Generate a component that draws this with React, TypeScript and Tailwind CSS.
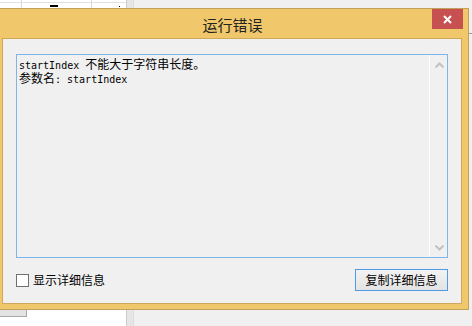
const cjk = "font-['Noto_Sans_CJK_SC',sans-serif]";

const Mono = ({ children }: { children: string }) => (
  <span className="font-['DejaVu_Sans_Mono',monospace] text-[10px]">{children}</span>
);

const Chevron = ({ up }: { up?: boolean }) => (
  <svg width="9" height="6" viewBox="0 0 9 6" className="block">
    <path
      d={up ? "M0.5 5.5 L4.5 1.5 L8.5 5.5" : "M0.5 0.5 L4.5 4.5 L8.5 0.5"}
      fill="none"
      stroke="#c2c2c2"
      strokeWidth="2"
    />
  </svg>
);

const Desktop = () => (
  <div className="flex h-full">
    {/* spreadsheet behind the dialog */}
    <div className="w-[126px] bg-white flex flex-col">
      <div className="h-[8px] flex">
        <div className="w-[22px] border-r border-[#dadada] flex flex-col">
          <div className="h-[3px] border-b border-[#e2e2e2]" />
        </div>
        <div className="w-[70px] border-r border-[#dadada] flex flex-col">
          <div className="h-[3px] border-b border-[#e2e2e2]" />
          <div className="ml-[28px] mt-[2px] w-[8px] h-[2px] bg-black" />
        </div>
        <div className="flex-1 flex flex-col">
          <div className="h-[3px] border-b border-[#e2e2e2]" />
          <div className="ml-[27px] mt-[3px] w-[1px] h-[1px] bg-black" />
        </div>
      </div>
      <div className="flex-1" />
      <div className="h-[16px]">
        <div className="w-[27px] h-[7px] bg-[#e3e3e3] border-r border-b border-[#a8a8a8]" />
      </div>
    </div>
    <div className="w-[7px] bg-[#e6e6e6] border-l border-[#cdcdcd]" />
    <div className="flex-1 bg-[#f0f0f0] border-l border-[#dcdcdc] flex flex-col items-end">
      <div className="mt-[33px] w-[4px] border-t border-[#a0a0a0]" />
    </div>
  </div>
);

const ErrorDialog = () => (
  <div className="absolute left-[-4px] top-[8px] w-[473px] h-[302px] border border-[#c4a158] bg-[#f0c86b] flex flex-col">
    <div className="h-[29px] grid grid-cols-[1fr_auto_1fr]">
      <div />
      <div className={`${cjk} text-[15px] leading-[29px] pt-[1px] text-[#222]`}>运行错误</div>
      <div className="flex justify-end items-start pr-[5px]">
        <div className="w-[31px] h-[20px] bg-[#c75050] flex items-center justify-center">
          <svg width="9" height="9" viewBox="0 0 9 9">
            <path d="M1 1 L8 8 M8 1 L1 8" stroke="white" strokeWidth="2" />
          </svg>
        </div>
      </div>
    </div>

    <div className="flex-1 pl-[5px] pr-[6px] pb-[5px] flex">
      <div className="flex-1 border border-[#cfa95a] bg-[#f0f0f0] flex flex-col pt-[15px] px-[13px]">
        <div className="h-[204px] border border-[#80b5ea] flex">
          <div className={`${cjk} flex-1 text-[12px] leading-[12px] text-black pl-[2px] pt-[3px]`}>
            <div>
              <Mono>startIndex </Mono>不能大于字符串长度。
            </div>
            <div>
              参数名<Mono>: startIndex</Mono>
            </div>
          </div>
          <div className="w-[18px] border-l border-white flex flex-col items-center justify-between pt-[7px] pb-[6px] pl-[1px]">
            <Chevron up />
            <Chevron />
          </div>
        </div>

        <div className="mt-[11px] flex items-center justify-between">
          <label className={`${cjk} flex items-center gap-[4px] text-[12px] text-black`}>
            <span className="w-[13px] h-[13px] border border-[#707070] bg-white" />
            显示详细信息
          </label>
          <button
            className={`${cjk} w-[93px] h-[22px] border border-[#4d9be6] bg-gradient-to-b from-[#f3f3f3] to-[#e3e3e3] text-[12px] text-black leading-none`}
          >
            复制详细信息
          </button>
        </div>
      </div>
    </div>
  </div>
);

export default function App() {
  return (
    <div className="relative w-[472px] h-[326px] overflow-hidden bg-[#f0f0f0]">
      <Desktop />
      <ErrorDialog />
    </div>
  );
}
